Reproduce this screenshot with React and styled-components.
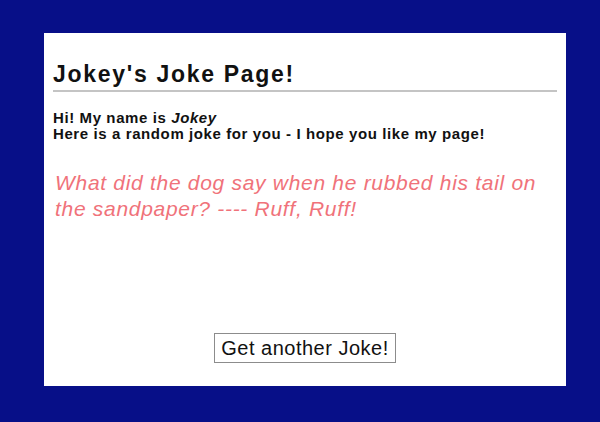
import React, { useState } from 'react';
import styled, { createGlobalStyle } from 'styled-components';

const jokes = [
    "What did the dog say when he rubbed his tail on the sandpaper? ---- Ruff, Ruff!",
    "Why don't skeletons fight each other? ---- They don't have the guts.",
    "What do you call a fake noodle? ---- An impasta!",
];

const App = () => {
    const [jokeIndex, setJokeIndex] = useState(0);

    const onNewJokeClick = () => {
        setJokeIndex((jokeIndex + 1) % jokes.length);
    }

    return (
    <>
        <GlobalStyle />
        <Page>
            <Title>Jokey's Joke Page!</Title>
            <Intro>
                Hi! My name is <em>Jokey</em><br />
                Here is a random joke for you - I hope you like my page!
            </Intro>
            <Joke>{jokes[jokeIndex]}</Joke>
            <ButtonRow>
                <JokeButton onClick={onNewJokeClick}>Get another Joke!</JokeButton>
            </ButtonRow>
        </Page>
    </>)
}

const GlobalStyle = createGlobalStyle`
    html, body {
        margin: 0;
        padding: 0;
        background: #070f88;
    }
    body {
        font-family: "Liberation Sans", Arial, sans-serif;
        width: 600px;
        height: 422px;
        overflow: hidden;
    }
`;

const Page = styled.div`
    display: flex;
    flex-direction: column;
    box-sizing: border-box;
    margin: 33px 34px 0 44px;
    height: 353px;
    padding: 28px 9px 0 9px;
    background: #ffffff;
`;

const Title = styled.h1`
    margin: 0;
    padding-bottom: 3px;
    font-size: 23px;
    line-height: 26px;
    letter-spacing: 1.7px;
    font-weight: bold;
    color: #111;
    border-bottom: 2px solid #c4c4c4;
`;

const Intro = styled.p`
    margin: 18px 0 0 0;
    font-size: 15px;
    line-height: 16px;
    letter-spacing: 0.6px;
    font-weight: bold;
    color: #111;

    em {
        font-style: italic;
    }
`;

const Joke = styled.p`
    margin: 28px 0 0 2px;
    font-size: 21px;
    line-height: 26px;
    letter-spacing: 0.7px;
    font-style: italic;
    color: #f0727a;
`;

const ButtonRow = styled.div`
    display: flex;
    justify-content: center;
    margin-top: auto;
    margin-bottom: 23px;
`;

const JokeButton = styled.button`
    font-family: "Liberation Sans", Arial, sans-serif;
    font-size: 20px;
    line-height: 24px;
    letter-spacing: 0.5px;
    padding: 2px 6px;
    color: #111;
    background: #fff;
    border: 1px solid #8c8c8c;
    border-radius: 0;
    cursor: pointer;
`;

export default App;
